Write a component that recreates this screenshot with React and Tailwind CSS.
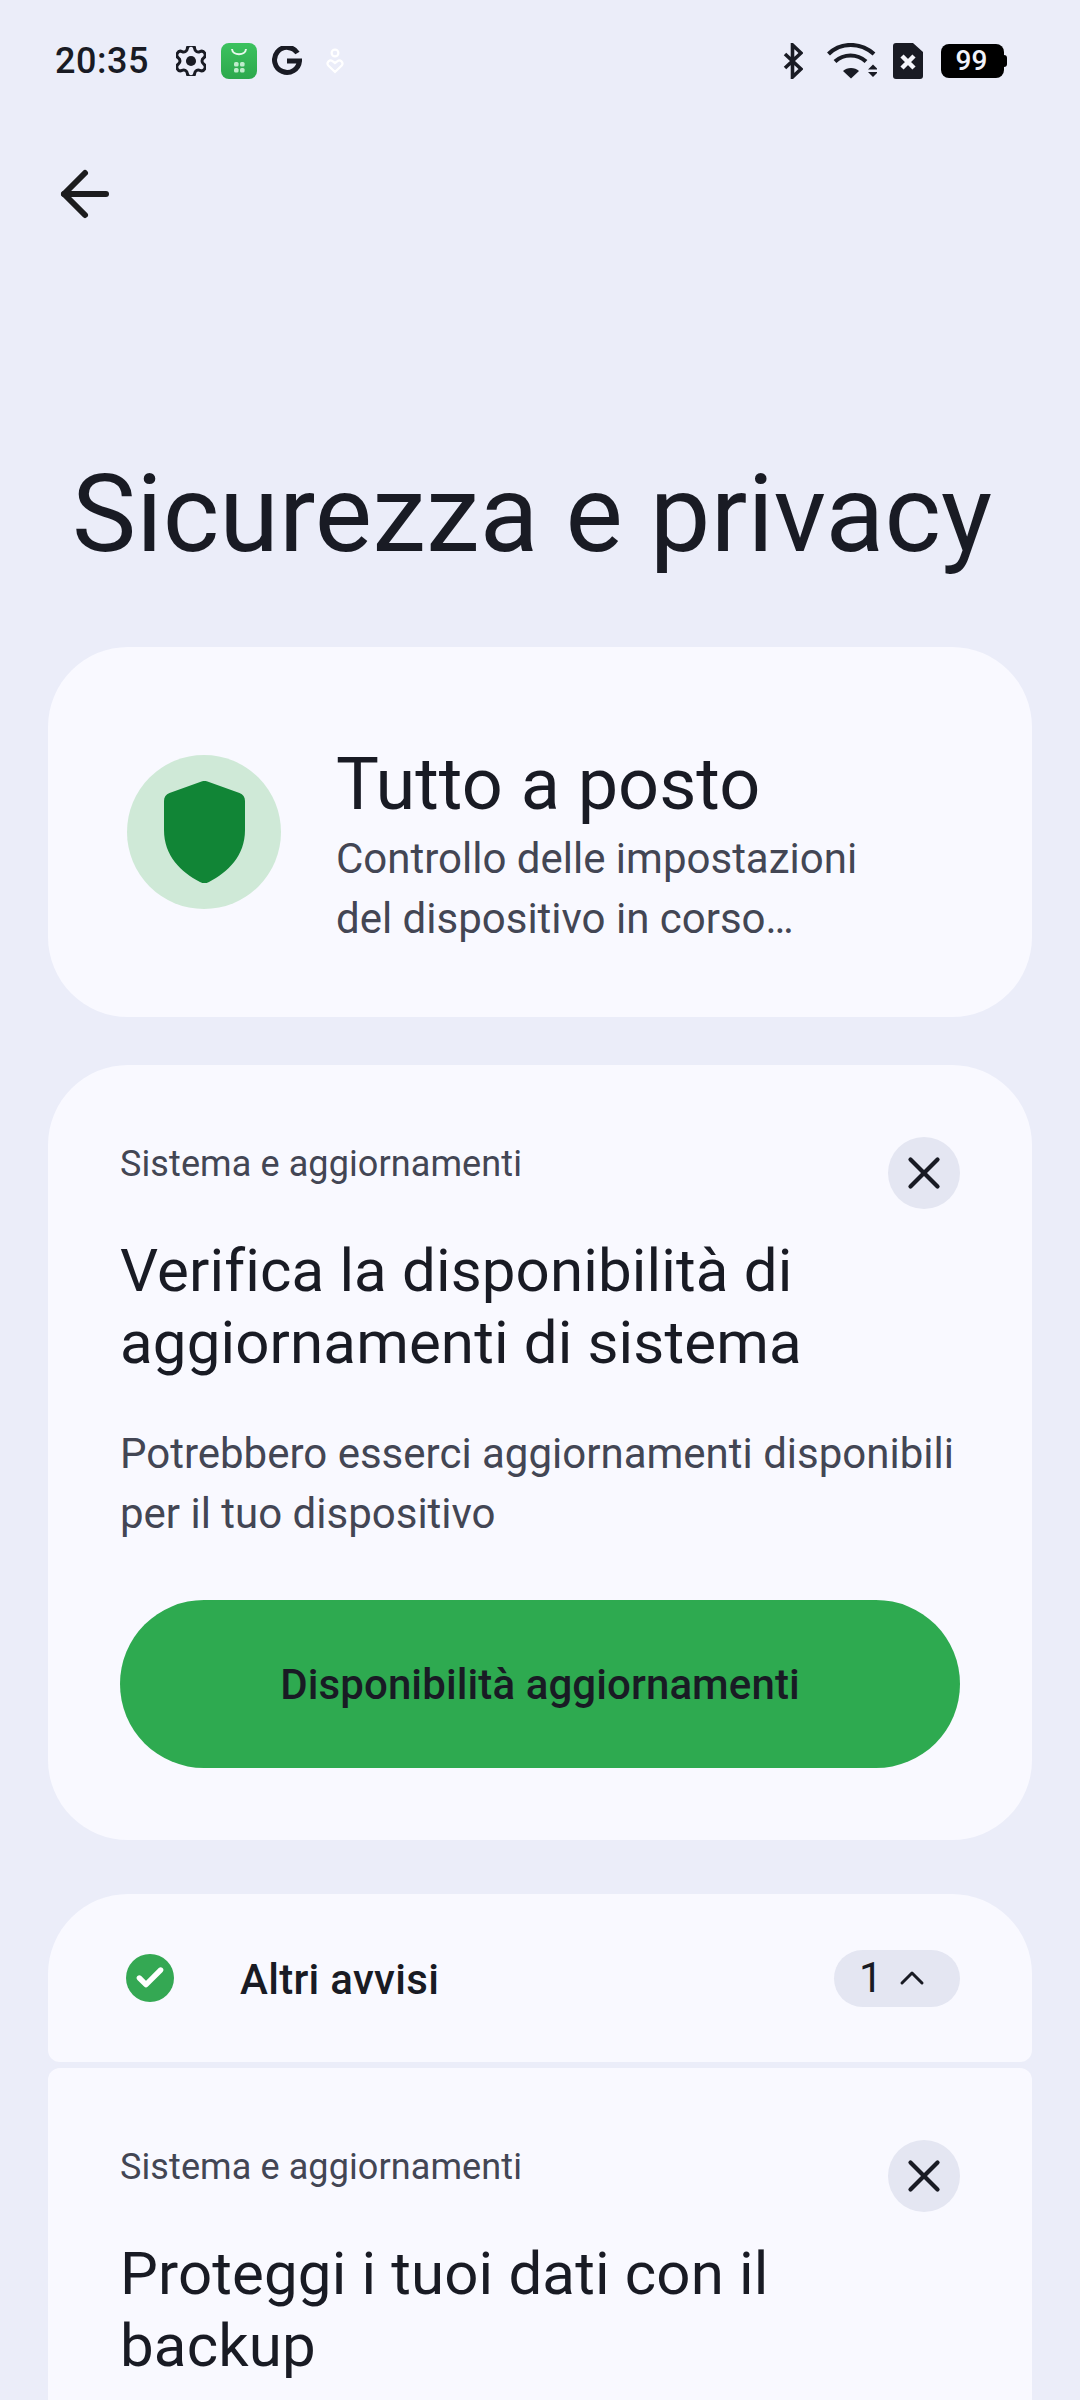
import React from "react";
import { ArrowLeft, X, ChevronUp, Check } from "lucide-react";

function StatusBar() {
  return (
    <div className="flex items-center justify-between h-[122px] pl-[55px] pr-[73px] text-[#191b24]">
      <div className="flex items-center">
        <span className="text-[36px] font-medium leading-none tracking-[0.5px] w-[121px]">20:35</span>
        <svg width="30" height="30" viewBox="2.5 2.5 19 19" fill="none" stroke="#191b24" strokeWidth="1.9" className="mr-[15px]">
          <path d="M9.671 4.136a2.34 2.34 0 0 1 4.659 0 2.34 2.34 0 0 0 3.319 1.915 2.34 2.34 0 0 1 2.33 4.033 2.34 2.34 0 0 0 0 3.831 2.34 2.34 0 0 1-2.33 4.033 2.34 2.34 0 0 0-3.319 1.915 2.34 2.34 0 0 1-4.659 0 2.34 2.34 0 0 0-3.32-1.915 2.34 2.34 0 0 1-2.33-4.033 2.34 2.34 0 0 0 0-3.831A2.34 2.34 0 0 1 6.35 6.051a2.34 2.34 0 0 0 3.319-1.915" />
          <circle cx="12" cy="12" r="3.200" fill="#191b24" stroke="none" />
        </svg>
        <div className="w-[36px] h-[36px] rounded-[8px] bg-gradient-to-b from-[#3cc25f] to-[#2ca84c] mr-[15px] flex items-center justify-center">
          <svg width="36" height="36" viewBox="0 0 36 36" fill="none">
            <path d="M11 6c.6 7 13.4 7 14 0" stroke="#e8f8ec" strokeWidth="2" />
            <g fill="#bfeccb">
              <rect x="13" y="19" width="4.6" height="4.6" rx="1.6" />
              <rect x="19" y="19" width="4.6" height="4.6" rx="1.6" />
              <rect x="13" y="25" width="4.6" height="4.6" rx="1.6" />
              <rect x="19" y="25" width="4.6" height="4.6" rx="1.6" />
            </g>
          </svg>
        </div>
        <svg width="30" height="30" viewBox="0 0 30 30" fill="none" className="mr-[24px]">
          <path d="M25.500 7A12.500 12.500 0 1 0 27.500 15H15" stroke="#191b24" strokeWidth="5" />
        </svg>
        <svg width="18" height="26" viewBox="0 0 18 26" fill="none" stroke="#ffffff" strokeWidth="2.2">
          <circle cx="9" cy="5" r="3.400" />
          <path d="M9 24 2.300 17.500c-2.400-3 1.600-6.500 4.200-4.400L9 15l2.500-1.900c2.600-2.100 6.600 1.400 4.200 4.400Z" />
        </svg>
      </div>
      <div className="flex items-center">
        <svg width="20" height="36" viewBox="0 0 20 36" fill="none" stroke="#191b24" strokeWidth="3.600" className="mr-[24px]">
          <path d="M2 11 18 26 9.500 34V2L18 10 2 25" />
        </svg>
        <svg width="50" height="36" viewBox="0 0 50 36" fill="none" className="mr-[16px]">
          <path d="M1.500 11C14-1 33-1 47 11" stroke="#191b24" strokeWidth="4.200" />
          <path d="M8 18.500c9-8 22-8 31 0" stroke="#191b24" strokeWidth="4.200" />
          <path d="M16 28c4-4 12-4 16 0l-8 7.500Z" fill="#191b24" />
          <path d="M41 26.500h10l-5-5ZM41 29h10l-5 5Z" fill="#191b24" />
        </svg>
        <div className="w-[30px] h-[36px] mr-[18px]">
          <svg width="30" height="36" viewBox="0 0 30 36" fill="none">
            <path d="M3 0h17l10 9v24a3 3 0 0 1-3 3H3a3 3 0 0 1-3-3V3a3 3 0 0 1 3-3Z" fill="#191b24" />
            <path d="M9 13 21 25M21 13 9 25" stroke="#f4f5fb" strokeWidth="4.500" />
          </svg>
        </div>
        <div className="flex items-center">
          <div className="w-[63px] h-[34px] rounded-[8px] bg-black text-[#f2f3fa] text-[28px] font-medium flex items-center justify-center leading-none pr-[2px]">99</div>
          <div className="w-[3px] h-[12px] rounded-r-[3px] bg-black" />
        </div>
      </div>
    </div>
  );
}

function CloseButton() {
  return (
    <div className="w-[72px] h-[72px] rounded-full bg-[#e4e6f2] flex items-center justify-center shrink-0 text-[#191b24]">
      <X size={54} strokeWidth={1.9} />
    </div>
  );
}

function App() {
  return (
    <div className="w-[1080px] h-[2400px] overflow-hidden bg-[#ebedf9] text-[#191b24] font-['Roboto',sans-serif]">
      <StatusBar />

      <div className="pl-[49px] mt-[42px] h-[60px] flex items-center">
        <ArrowLeft size={72} strokeWidth={2} className="text-[#1c1c1e]" />
      </div>

      <h1 className="text-[108px] leading-[130px] font-normal pl-[72px] mt-[225px] mb-[68px] tracking-[0.15px] whitespace-nowrap">
        Sicurezza e privacy
      </h1>

      <div className="px-[48px] flex flex-col">
        <div className="bg-[#f9f9ff] rounded-[80px] h-[370px] flex items-center pl-[79px] mb-[48px]">
          <div className="w-[154px] h-[154px] rounded-full bg-[#cfe9d7] flex items-center justify-center mr-[55px] shrink-0">
            <svg width="81" height="102" viewBox="0 0 81 102">
              <path d="M37.500.5a8 8 0 0 1 6 0l32 11.500C79 13.500 81 16 81 20v29c0 26-17 42-36 52a9 9 0 0 1-9 0C17 91 0 75 0 49V20c0-4 2-6.500 5.500-8Z" fill="#118536" />
            </svg>
          </div>
          <div className="mt-[28px]">
            <div className="text-[72px] leading-[84px] whitespace-nowrap">Tutto a posto</div>
            <div className="text-[42px] leading-[60px] text-[#434654] mt-[2px]">
              Controllo delle impostazioni
              <br />
              del dispositivo in corso…
            </div>
          </div>
        </div>

        <div className="bg-[#f9f9ff] rounded-[80px] h-[775px] px-[72px] pt-[72px] mb-[54px]">
          <div className="flex justify-between">
            <div className="text-[36px] leading-[48px] text-[#434654] tracking-[0.1px] mt-[3px]">Sistema e aggiornamenti</div>
            <CloseButton />
          </div>
          <div className="text-[60px] leading-[72px] mt-[26px] tracking-[0.15px]">
            Verifica la disponibilità di
            <br />
            aggiornamenti di sistema
          </div>
          <div className="text-[42px] leading-[60px] text-[#434654] mt-[45px]">
            Potrebbero esserci aggiornamenti disponibili
            <br />
            per il tuo dispositivo
          </div>
          <div className="mt-[56px] h-[168px] rounded-full bg-[#2eaa50] flex items-center justify-center text-[42px] font-medium tracking-[0.1px] text-[#191b24]">
            Disponibilità aggiornamenti
          </div>
        </div>

        <div className="bg-[#f9f9ff] rounded-t-[80px] rounded-b-[12px] h-[168px] flex items-center pl-[78px] pr-[72px] mb-[6px]">
          <div className="w-[48px] h-[48px] rounded-full bg-[#34a853] flex items-center justify-center mr-[66px]">
            <Check size={32} strokeWidth={4} className="text-white" />
          </div>
          <div className="text-[42px] font-medium flex-1 tracking-[0.3px] mt-[2px]">Altri avvisi</div>
          <div className="w-[126px] h-[57px] rounded-full bg-[#e4e6f2] flex items-center pl-[25px]">
            <span className="text-[42px] leading-none w-[24px]">1</span>
            <ChevronUp size={40} strokeWidth={1.8} className="ml-[9px]" />
          </div>
        </div>

        <div className="bg-[#f9f9ff] rounded-[12px] h-[600px] px-[72px] pt-[72px]">
          <div className="flex justify-between">
            <div className="text-[36px] leading-[48px] text-[#434654] tracking-[0.1px] mt-[3px]">Sistema e aggiornamenti</div>
            <CloseButton />
          </div>
          <div className="text-[60px] leading-[72px] mt-[26px] tracking-[0.15px]">
            Proteggi i tuoi dati con il
            <br />
            backup
          </div>
        </div>
      </div>
    </div>
  );
}

export default App;
